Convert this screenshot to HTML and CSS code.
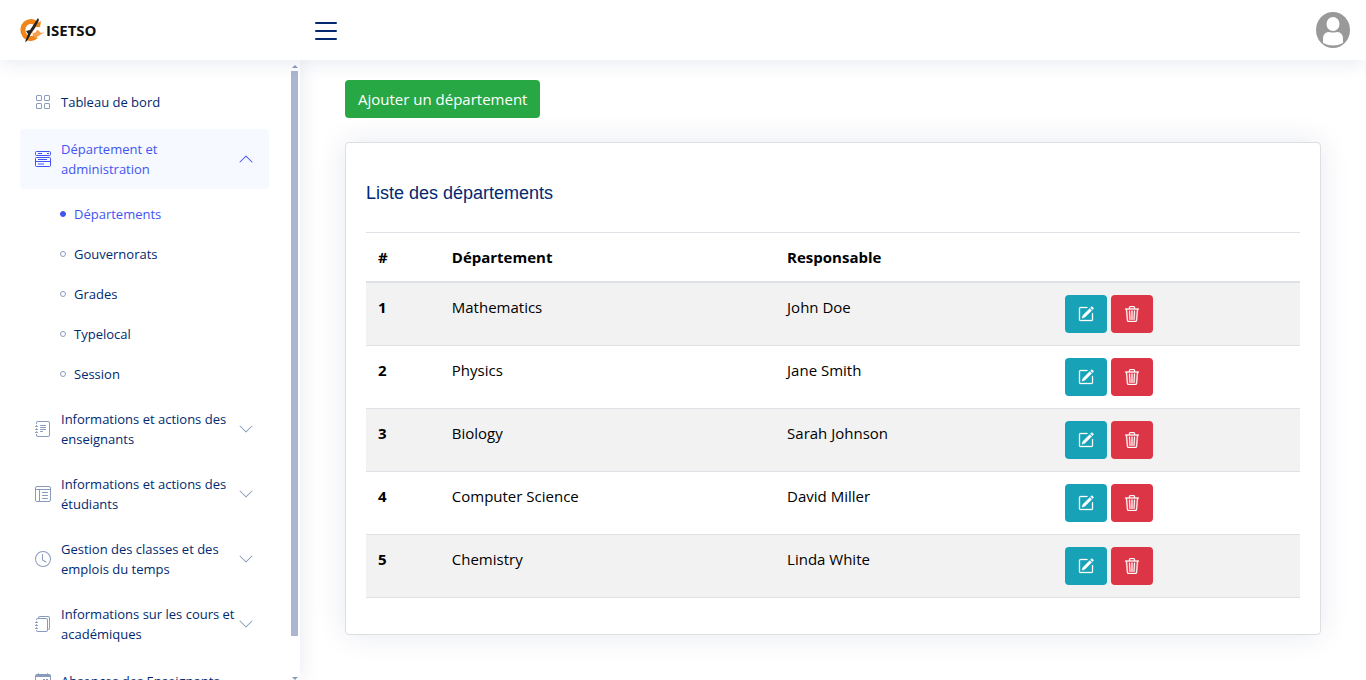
FILE: index.html
```html
<!DOCTYPE html>
<html lang="fr">
<head>
<meta charset="utf-8">
<title>Départements - ISETSO</title>
<meta name="viewport" content="width=device-width, initial-scale=1">
<link rel="stylesheet" href="styles.css">
</head>
<body>
<svg class="sprite" aria-hidden="true">
  <symbol id="i-grid" viewBox="0 0 16 16"><path d="M1 2.500A1.500 1.500 0 0 1 2.500 1h3A1.500 1.500 0 0 1 7 2.500v3A1.500 1.500 0 0 1 5.500 7h-3A1.500 1.500 0 0 1 1 5.500zM2.500 2a.5.500 0 0 0-.5.500v3a.5.500 0 0 0 .5.500h3a.5.500 0 0 0 .5-.5v-3a.5.500 0 0 0-.5-.5zm6.500.5A1.500 1.500 0 0 1 10.500 1h3A1.500 1.500 0 0 1 15 2.500v3A1.500 1.500 0 0 1 13.500 7h-3A1.500 1.500 0 0 1 9 5.500zm1.500-.5a.5.500 0 0 0-.5.500v3a.5.500 0 0 0 .5.500h3a.5.500 0 0 0 .5-.5v-3a.5.500 0 0 0-.5-.5zM1 10.500A1.500 1.500 0 0 1 2.500 9h3A1.500 1.500 0 0 1 7 10.500v3A1.500 1.500 0 0 1 5.500 15h-3A1.500 1.500 0 0 1 1 13.500zm1.500-.5a.5.500 0 0 0-.5.500v3a.5.500 0 0 0 .5.500h3a.5.500 0 0 0 .5-.5v-3a.5.500 0 0 0-.5-.5zm6.500.5A1.500 1.500 0 0 1 10.500 9h3a1.500 1.500 0 0 1 1.500 1.500v3a1.500 1.500 0 0 1-1.500 1.500h-3A1.500 1.500 0 0 1 9 13.500zm1.500-.5a.5.500 0 0 0-.5.500v3a.5.500 0 0 0 .5.500h3a.5.500 0 0 0 .5-.5v-3a.5.500 0 0 0-.5-.5z"/></symbol>
  <symbol id="i-stack" viewBox="0 0 16 16"><g fill="none" stroke="currentColor"><rect x=".5" y=".5" width="15" height="4" rx="1"/><rect x=".5" y="6.500" width="15" height="9" rx="1"/><path d="M3 2.500h4M12 2.500h2M3 8.500h9M.5 10.500h15M3 13h6"/></g></symbol>
  <symbol id="i-journal" viewBox="0 0 16 16"><path d="M5 10.500a.5.500 0 0 1 .5-.5h2a.5.500 0 0 1 0 1h-2a.5.500 0 0 1-.5-.5m0-2a.5.500 0 0 1 .5-.5h5a.5.500 0 0 1 0 1h-5a.5.500 0 0 1-.5-.5m0-2a.5.500 0 0 1 .5-.5h5a.5.500 0 0 1 0 1h-5a.5.500 0 0 1-.5-.5m0-2a.5.500 0 0 1 .5-.5h5a.5.500 0 0 1 0 1h-5a.5.500 0 0 1-.5-.5"/><path d="M3 0h10a2 2 0 0 1 2 2v12a2 2 0 0 1-2 2H3a2 2 0 0 1-2-2v-1h1v1a1 1 0 0 0 1 1h10a1 1 0 0 0 1-1V2a1 1 0 0 0-1-1H3a1 1 0 0 0-1 1v1H1V2a2 2 0 0 1 2-2"/><path d="M1 5v-.5a.5.500 0 0 1 1 0V5h.5a.5.500 0 0 1 0 1h-2a.5.500 0 0 1 0-1zm0 3v-.5a.5.500 0 0 1 1 0V8h.5a.5.500 0 0 1 0 1h-2a.5.500 0 0 1 0-1zm0 3v-.5a.5.500 0 0 1 1 0v.5h.5a.5.500 0 0 1 0 1h-2a.5.500 0 0 1 0-1z"/></symbol>
  <symbol id="i-layout" viewBox="0 0 16 16"><g fill="none" stroke="currentColor"><rect x=".5" y=".5" width="15" height="15" rx="1.500"/><path d="M.5 3.500h15M4.500 3.500v12"/><path stroke-linecap="round" d="M7.500 6.500h5M7.500 9.500h5M7.500 12.500h5"/></g></symbol>
  <symbol id="i-clock" viewBox="0 0 16 16"><path d="M8 3.500a.5.500 0 0 0-1 0V9a.5.500 0 0 0 .252.434l3.500 2a.5.500 0 0 0 .496-.868L8 8.710z"/><path d="M8 16A8 8 0 1 0 8 0a8 8 0 0 0 0 16m7-8A7 7 0 1 1 1 8a7 7 0 0 1 14 0"/></symbol>
  <symbol id="i-journals" viewBox="0 0 16 16"><path d="M5 0h8a2 2 0 0 1 2 2v10a2 2 0 0 1-2 2 2 2 0 0 1-2 2H3a2 2 0 0 1-2-2h1a1 1 0 0 0 1 1h8a1 1 0 0 0 1-1V4a1 1 0 0 0-1-1H3a1 1 0 0 0-1 1H1a2 2 0 0 1 2-2h8a2 2 0 0 1 2 2v9a1 1 0 0 0 1-1V2a1 1 0 0 0-1-1H5a1 1 0 0 0-1 1H3a2 2 0 0 1 2-2"/><path d="M1 6v-.5a.5.500 0 0 1 1 0V6h.5a.5.500 0 0 1 0 1h-2a.5.500 0 0 1 0-1zm0 3v-.5a.5.500 0 0 1 1 0V9h.5a.5.500 0 0 1 0 1h-2a.5.500 0 0 1 0-1zm0 2.500v.5H.5a.5.500 0 0 0 0 1h2a.5.500 0 0 0 0-1H2v-.5a.5.500 0 0 0-1 0"/></symbol>
  <symbol id="i-calendar" viewBox="0 0 16 16"><path d="M4 .5a.5.500 0 0 0-1 0V1H2a2 2 0 0 0-2 2v1h16V3a2 2 0 0 0-2-2h-1V.5a.5.500 0 0 0-1 0V1H4zM0 4v10a2 2 0 0 0 2 2h12a2 2 0 0 0 2-2V4h-1v10a1 1 0 0 1-1 1H2a1 1 0 0 1-1-1V4z"/><path d="M8 6h2v2H8zm3 0h2v2h-2zM3 10h2v2H3zm3 0h2v2H6z"/></symbol>
  <symbol id="i-chevron" viewBox="0 0 16 16"><path d="M1.646 4.646a.5.500 0 0 1 .708 0L8 10.293l5.646-5.647a.5.500 0 0 1 .708.708l-6 6a.5.500 0 0 1-.708 0l-6-6a.5.500 0 0 1 0-.708"/></symbol>
  <symbol id="i-edit" viewBox="0 0 16 16"><path d="M15.502 1.940a.5.500 0 0 1 0 .706L14.459 3.690l-2-2L13.502.646a.5.500 0 0 1 .707 0l1.293 1.293zm-1.750 2.456-2-2L4.939 9.210a.5.500 0 0 0-.121.196l-.805 2.414a.25.250 0 0 0 .316.316l2.414-.805a.5.500 0 0 0 .196-.12z"/><path d="M1 13.500A1.500 1.500 0 0 0 2.500 15h11a1.500 1.500 0 0 0 1.500-1.500v-6a.5.500 0 0 0-1 0v6a.5.500 0 0 1-.5.500h-11a.5.500 0 0 1-.5-.5v-11a.5.500 0 0 1 .5-.5H9a.5.500 0 0 0 0-1H2.500A1.500 1.500 0 0 0 1 2.500z"/></symbol>
  <symbol id="i-trash" viewBox="0 0 16 16"><path d="M6.500 1h3a.5.500 0 0 1 .5.500v1H6v-1a.5.500 0 0 1 .5-.5M11 2.500v-1A1.500 1.500 0 0 0 9.500 0h-3A1.500 1.500 0 0 0 5 1.500v1H1.500a.5.500 0 0 0 0 1h.538l.853 10.660A2 2 0 0 0 4.885 16h6.230a2 2 0 0 0 1.994-1.840l.853-10.660h.538a.5.500 0 0 0 0-1zm1.958 1-.846 10.580a1 1 0 0 1-.997.920h-6.230a1 1 0 0 1-.997-.92L3.042 3.500zm-7.487 1a.5.500 0 0 1 .528.470l.5 8.500a.5.500 0 0 1-.998.060L5 5.030a.5.500 0 0 1 .47-.53zm5.058 0a.5.500 0 0 1 .47.530l-.5 8.500a.5.500 0 1 1-.998-.06l.5-8.500a.5.500 0 0 1 .528-.47M8 4.500a.5.500 0 0 1 .5.500v8.500a.5.500 0 0 1-1 0V5a.5.500 0 0 1 .5-.5"/></symbol>
</svg>

<header class="header">
  <div class="brand-area">
    <a class="logo" href="#">
      <svg class="logo-mark" viewBox="0 0 26 26" aria-hidden="true">
        <path fill="none" stroke="#f0861a" stroke-width="5" d="M17 7.500A8 8.500 0 1 0 16 19.500"/>
        <path fill="#f0861a" d="M14 8L21 4L20 10L16 10Z"/>
        <path fill="#f5a04c" d="M11 15L18 13L21 16L25 15L20 18L15 21Z"/>
        <path fill="#fff" d="M13 14L17 11L16 15L12 17Z"/>
        <path fill="#262320" d="M18 1L19 3L15 11L12 15L7 24L5 25L8 17L6 14L10 13Z"/>
      </svg>
      <span>ISETSO</span>
    </a>
  </div>
  <button class="menu-toggle" type="button" aria-label="Menu">
    <svg viewBox="0 0 22 20" aria-hidden="true"><path fill="none" stroke="currentColor" stroke-width="2" stroke-linecap="round" d="M1 3h20M1 11h20M1 19h20"/></svg>
  </button>
  <button class="profile" type="button" aria-label="Profil">
    <svg viewBox="0 0 34 36" aria-hidden="true"><ellipse cx="17" cy="18" rx="17" ry="18" fill="#999"/><ellipse cx="17" cy="12" rx="6.500" ry="7" fill="#fff"/><path fill="#fff" d="M7 31v-4c0-4 2-7 6-7q4 1 8 0c4 0 6 3 6 7v4q-10 5-20 0z"/></svg>
  </button>
</header>

<div class="shell">
  <aside class="sidebar">
    <nav class="nav" aria-label="Navigation principale">
      <a class="nav-link" href="#"><svg class="icon"><use href="#i-grid"/></svg><span class="label">Tableau de bord</span></a>
      <a class="nav-link active" href="#"><svg class="icon"><use href="#i-stack"/></svg><span class="label">Département et administration</span><svg class="chevron up"><use href="#i-chevron"/></svg></a>
      <ul class="subnav">
        <li><a class="current" href="#">Départements</a></li>
        <li><a href="#">Gouvernorats</a></li>
        <li><a href="#">Grades</a></li>
        <li><a href="#">Typelocal</a></li>
        <li><a href="#">Session</a></li>
      </ul>
      <a class="nav-link" href="#"><svg class="icon"><use href="#i-journal"/></svg><span class="label">Informations et actions des enseignants</span><svg class="chevron"><use href="#i-chevron"/></svg></a>
      <a class="nav-link" href="#"><svg class="icon"><use href="#i-layout"/></svg><span class="label">Informations et actions des étudiants</span><svg class="chevron"><use href="#i-chevron"/></svg></a>
      <a class="nav-link" href="#"><svg class="icon"><use href="#i-clock"/></svg><span class="label">Gestion des classes et des emplois du temps</span><svg class="chevron"><use href="#i-chevron"/></svg></a>
      <a class="nav-link" href="#"><svg class="icon"><use href="#i-journals"/></svg><span class="label">Informations sur les cours et académiques</span><svg class="chevron"><use href="#i-chevron"/></svg></a>
      <a class="nav-link" href="#"><svg class="icon"><use href="#i-calendar"/></svg><span class="label">Absences des Enseignants</span></a>
    </nav>
    <div class="scrollbar" aria-hidden="true"><i class="arrow arrow-up"></i><i class="thumb"></i><i class="arrow arrow-down"></i></div>
  </aside>

  <main class="main">
    <button class="btn btn-add" type="button">Ajouter un département</button>
    <section class="card">
      <h1>Liste des départements</h1>
      <table>
        <colgroup><col class="col-id"><col class="col-name"><col class="col-head"><col></colgroup>
        <thead><tr><th scope="col">#</th><th scope="col">Département</th><th scope="col">Responsable</th><th></th></tr></thead>
        <tbody>
          <tr><th scope="row">1</th><td>Mathematics</td><td>John Doe</td><td><div class="actions"><button class="btn edit" type="button" aria-label="Modifier"><svg><use href="#i-edit"/></svg></button><button class="btn delete" type="button" aria-label="Supprimer"><svg><use href="#i-trash"/></svg></button></div></td></tr>
          <tr><th scope="row">2</th><td>Physics</td><td>Jane Smith</td><td><div class="actions"><button class="btn edit" type="button" aria-label="Modifier"><svg><use href="#i-edit"/></svg></button><button class="btn delete" type="button" aria-label="Supprimer"><svg><use href="#i-trash"/></svg></button></div></td></tr>
          <tr><th scope="row">3</th><td>Biology</td><td>Sarah Johnson</td><td><div class="actions"><button class="btn edit" type="button" aria-label="Modifier"><svg><use href="#i-edit"/></svg></button><button class="btn delete" type="button" aria-label="Supprimer"><svg><use href="#i-trash"/></svg></button></div></td></tr>
          <tr><th scope="row">4</th><td>Computer Science</td><td>David Miller</td><td><div class="actions"><button class="btn edit" type="button" aria-label="Modifier"><svg><use href="#i-edit"/></svg></button><button class="btn delete" type="button" aria-label="Supprimer"><svg><use href="#i-trash"/></svg></button></div></td></tr>
          <tr><th scope="row">5</th><td>Chemistry</td><td>Linda White</td><td><div class="actions"><button class="btn edit" type="button" aria-label="Modifier"><svg><use href="#i-edit"/></svg></button><button class="btn delete" type="button" aria-label="Supprimer"><svg><use href="#i-trash"/></svg></button></div></td></tr>
        </tbody>
      </table>
    </section>
  </main>
</div>
</body>
</html>
```
FILE: styles.css
```css
*, ::before { box-sizing: border-box; }

body {
  margin: 0;
  height: 100vh;
  display: flex;
  flex-direction: column;
  background: #fff;
  color: #000;
  font: 15px/24px "Open Sans", "Noto Sans", sans-serif;
}

a { color: inherit; text-decoration: none; }
button { font: inherit; cursor: pointer; }
svg { display: block; fill: currentColor; }
.sprite { position: absolute; width: 0; height: 0; }

.header {
  position: relative;
  z-index: 2;
  flex: none;
  height: 60px;
  display: flex;
  align-items: center;
  background: #fff;
  box-shadow: 0 2px 20px rgba(1, 41, 112, .1);
}
.brand-area { width: 300px; padding-left: 20px; }
.logo {
  display: flex;
  align-items: center;
  color: #111;
  font-weight: 700;
}
.logo-mark { width: 26px; height: 26px; }
.menu-toggle {
  margin-left: 15px;
  padding: 0;
  border: 0;
  background: none;
  color: #012970;
}
.menu-toggle svg { width: 22px; height: 20px; }
.profile {
  margin-left: auto;
  margin-right: 16px;
  padding: 0;
  border: 0;
  background: none;
}
.profile svg { width: 34px; height: 36px; }

.shell { flex: 1; min-height: 0; display: flex; }

.sidebar {
  position: relative;
  z-index: 1;
  flex: none;
  width: 300px;
  display: flex;
  background: #fff;
  box-shadow: 0 0 20px rgba(1, 41, 112, .1);
}
.nav {
  flex: 1;
  min-width: 0;
  padding: 20px 22px 20px 20px;
  display: flex;
  flex-direction: column;
  gap: 5px;
  overflow: hidden;
  color: #012970;
  font-size: 13px;
  line-height: 20px;
}
.nav-link {
  flex: none;
  min-height: 44px;
  padding: 10px 15px;
  display: flex;
  align-items: center;
  border-radius: 4px;
}
.nav-link.active { background: #f6f9ff; color: #4154f1; }
.nav-link .label { flex: 1; }
.icon { flex: none; width: 16px; height: 16px; margin-right: 10px; color: #899bbd; }
.chevron { flex: none; width: 16px; height: 16px; color: #899bbd; }
.active .icon, .active .chevron { color: #4154f1; }
.chevron.up { transform: rotate(180deg); }

.subnav { flex: none; margin: 0; padding: 0 0 0 40px; list-style: none; }
.subnav a { display: flex; align-items: center; gap: 8px; height: 40px; }
.subnav a::before {
  content: "";
  width: 6px;
  height: 6px;
  border: 1px solid #899bbd;
  border-radius: 50%;
}
.subnav .current { color: #4154f1; }
.subnav .current::before { border-color: #4154f1; background: #4154f1; }

.scrollbar {
  flex: none;
  width: 7px;
  margin-right: 2px;
  padding: 5px 0 0;
  display: flex;
  flex-direction: column;
  align-items: center;
}
.thumb { width: 7px; height: 565px; margin-top: 3px; background: #aab7cf; }
.arrow { border: 3px solid transparent; }
.arrow-up { border-top: 0; border-bottom-color: #899bbd; }
.arrow-down { margin-top: auto; border-bottom: 0; border-top-color: #899bbd; }

.main { flex: 1; min-width: 0; padding: 20px 45px; overflow: auto; }

.btn { height: 38px; border: 0; border-radius: 4px; padding: 0 13px; color: #fff; }
.btn-add { display: block; background: #28a745; }

.card {
  margin-top: 24px;
  padding: 20px 20px 36px;
  border: 1px solid #dfdfdf;
  border-radius: 4px;
  background: #fff;
  box-shadow: 0 0 30px rgba(1, 41, 112, .1);
}
h1 {
  margin: 20px 0 29px;
  color: #012970;
  font: 400 18px/20px "Liberation Sans", Arial, sans-serif;
}
table { width: 100%; table-layout: fixed; border-collapse: collapse; }
.col-id { width: 7.9%; }
.col-name { width: 35.9%; }
.col-head { width: 29.8%; }
th, td {
  padding: 12px;
  border-top: 1px solid #dee2e6;
  text-align: left;
  vertical-align: top;
}
thead th { border-bottom: 2px solid #dee2e6; }
tbody tr { border-bottom: 1px solid #dee2e6; }
tbody tr:nth-child(odd) { background: #f2f2f2; }

.actions { display: flex; gap: 4px; }
.edit { background: #17a2b8; }
.delete { background: #dc3545; }
.actions svg { width: 16px; height: 16px; stroke: #fff; stroke-width: .3; }
```
